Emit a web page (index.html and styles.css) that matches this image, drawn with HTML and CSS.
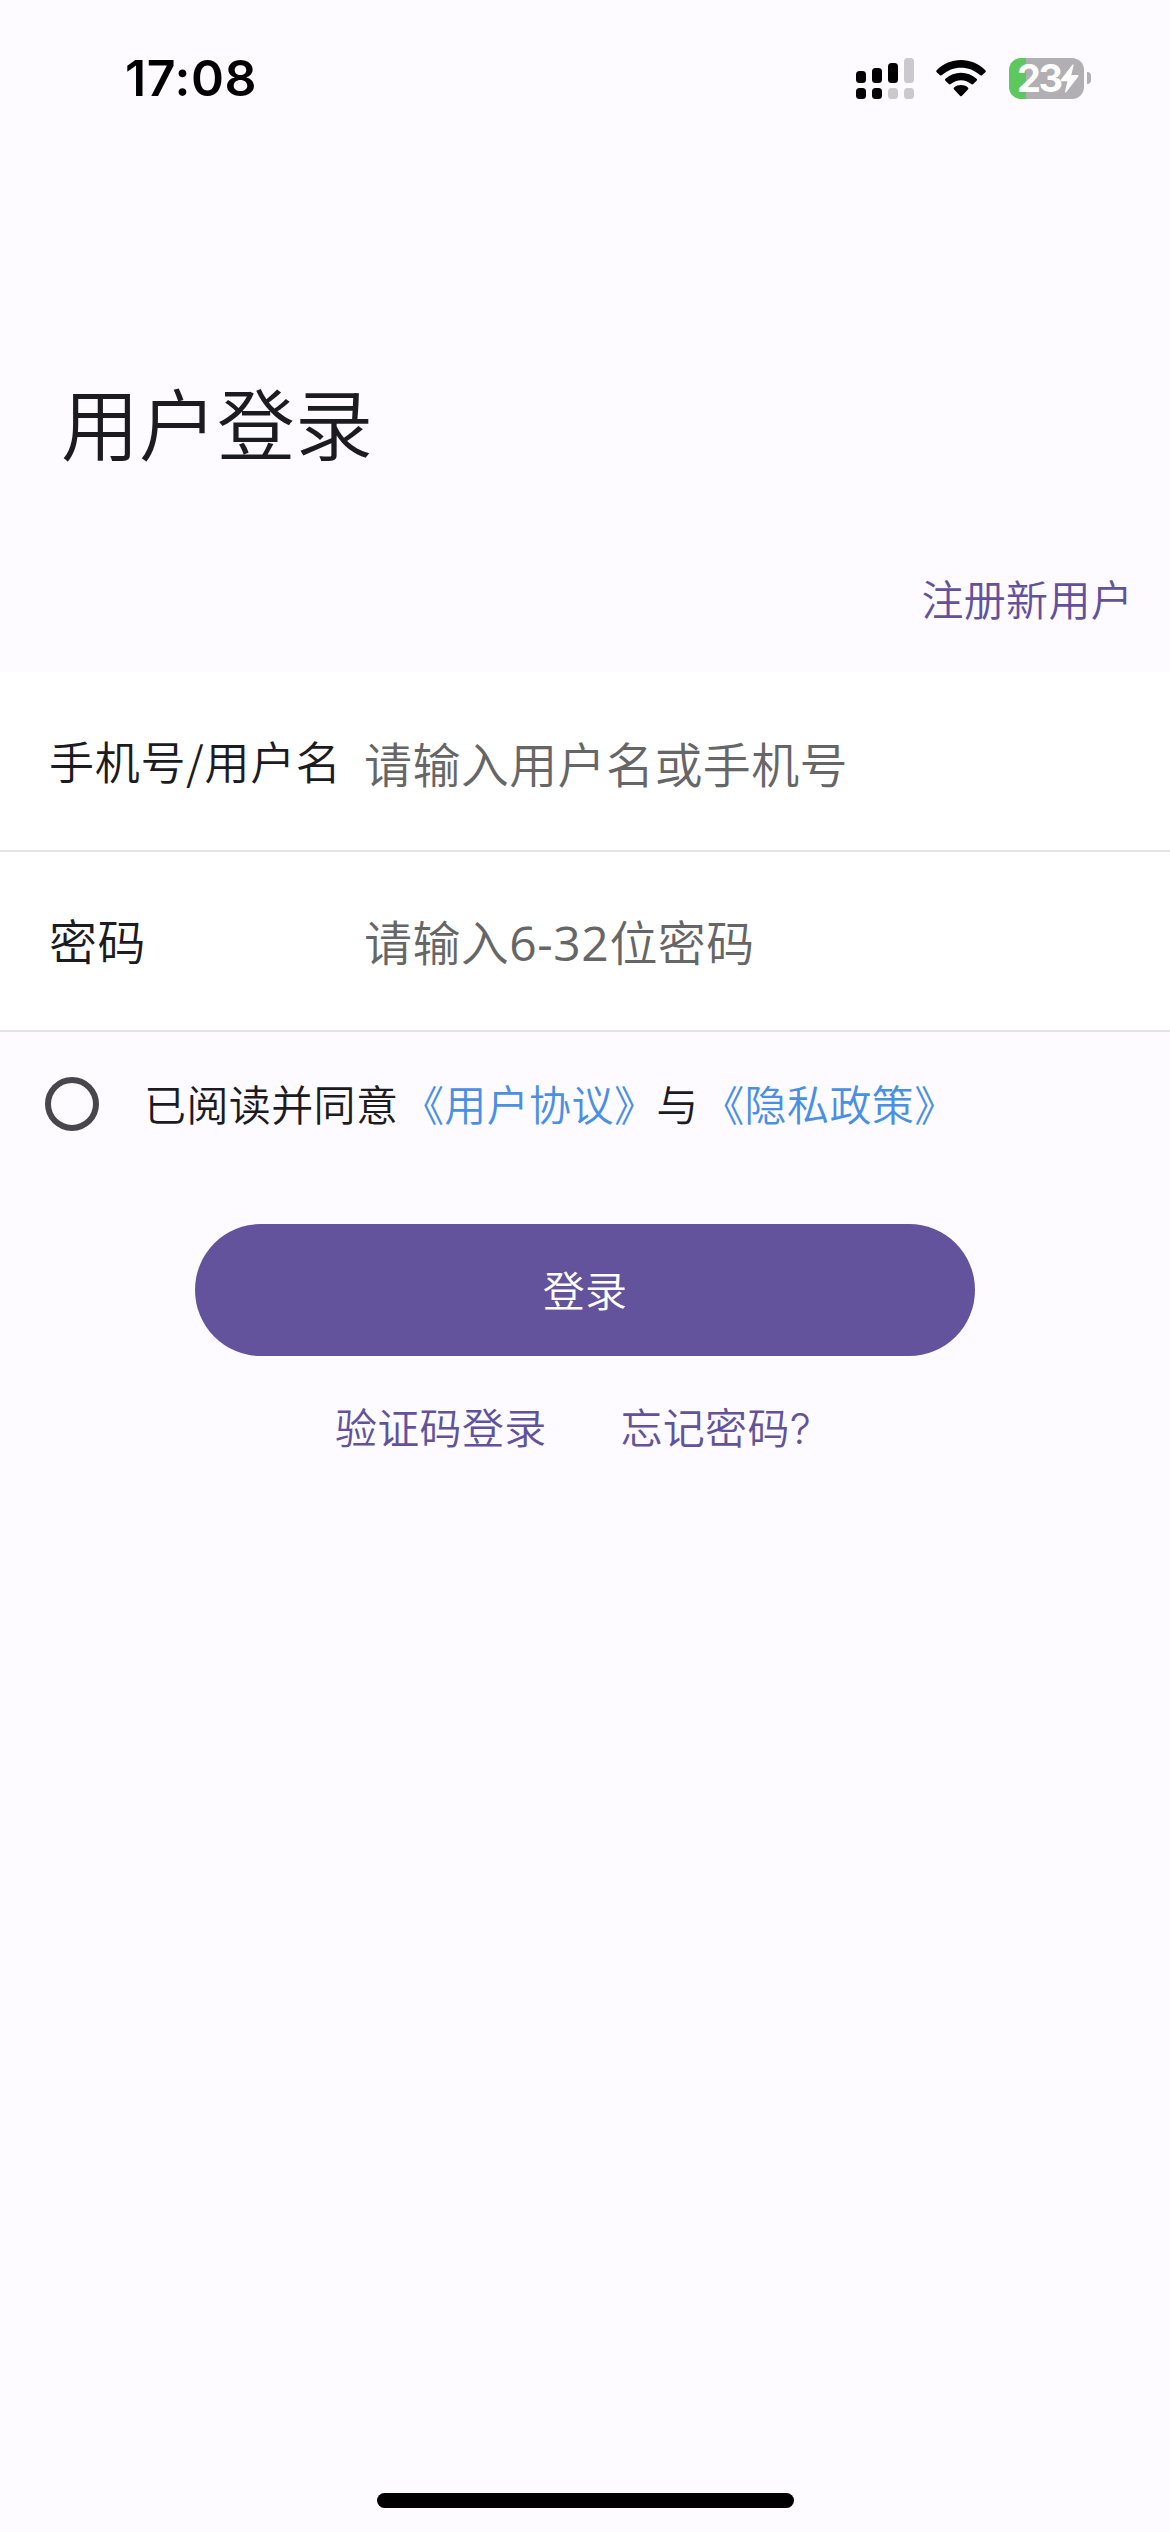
FILE: index.html
```html
<!DOCTYPE html>
<html lang="zh-CN">
<head>
<meta charset="utf-8">
<title>用户登录</title>
<link rel="stylesheet" href="styles.css">
</head>
<body>
<div class="screen">
  <header class="status">
    <span class="time">17:08</span>
    <div class="indicators">
      <svg class="signal" width="58" height="41" viewBox="0 0 58 41">
        <g fill="#000"><rect x="0" y="13" width="10" height="12" rx="3.5"/><rect x="16" y="10" width="10" height="15" rx="3.5"/><rect x="32" y="5" width="10" height="20" rx="3.5"/><rect x="0" y="30" width="10" height="11" rx="3.5"/><rect x="16" y="30" width="10" height="11" rx="3.5"/></g>
        <g fill="#cbc9cd"><rect x="48" y="0" width="10" height="25" rx="3.5"/><rect x="32" y="30" width="10" height="11" rx="3.5"/><rect x="48" y="30" width="10" height="11" rx="3.5"/></g>
      </svg>
      <svg class="wifi" width="50" height="37" viewBox="0 0 50 37">
        <path d="M.7 10.2C14-3.4 36-3.4 49.3 10.2Q50.3 11.2 49.3 12.2L46 15.2Q45 16 44 15.1C33.5 5.2 16.500 5.200 6 15.100Q5 16 4 15.200L.7 12.200Q-.3 11.200.7 10.200Z"/>
        <path d="M9.400 18.800C18 10.700 32 10.700 40.600 18.800Q41.600 19.800 40.600 20.800L37.200 24Q36.200 24.900 35.200 24C29.500 18.900 20.500 18.900 14.800 24Q13.800 24.900 12.800 24L9.400 20.800Q8.400 19.800 9.400 18.800Z"/>
        <path d="M18.100 27.400C22 24.200 28 24.200 31.900 27.400Q33 28.400 31.900 29.500L26 35.800Q25 36.800 24 35.800L18.100 29.500Q17 28.400 18.100 27.400Z"/>
      </svg>
      <div class="battery">
        <div class="cell">
          <span class="level">23</span>
          <svg class="bolt" width="19" height="29" viewBox="0 0 19 29"><path d="M12.700.5Q14 .200 13.500 1.700L11.300 11H17.500Q19.300 11.200 18.200 12.700L6.300 28Q4.900 29.300 5.100 27.300L7.500 17.200H1.500Q-.2 17 .9 15.400Z"/></svg>
        </div>
        <div class="cap"></div>
      </div>
    </div>
  </header>

  <h1 class="title">用户登录</h1>
  <div class="register"><a class="link">注册新用户</a></div>

  <form class="form">
    <div class="row">
      <span class="label label-small">手机号/用户名</span>
      <span class="hint">请输入用户名或手机号</span>
    </div>
    <div class="row">
      <span class="label">密码</span>
      <span class="hint">请输入<span class="digits">6-32</span>位密码</span>
    </div>
  </form>

  <div class="agree">
    <span class="radio"></span>
    <span class="terms">已阅读并同意<a class="doc">《用户协议》</a>与<a class="doc">《隐私政策》</a></span>
  </div>

  <div class="submit">登录</div>

  <nav class="links">
    <a class="link">验证码登录</a>
    <a class="link">忘记密码<span class="mark">?</span></a>
  </nav>

  <div class="home"></div>
</div>
</body>
</html>
```
FILE: styles.css
```css
* { box-sizing: border-box; }
body { margin: 0; background: #fdfbff; }
.screen {
  width: 1170px;
  height: 2532px;
  display: flex;
  flex-direction: column;
  overflow: hidden;
  font-family: "Noto Sans CJK SC DemiLight", "Noto Sans CJK SC", sans-serif;
  font-size: 42px;
  font-weight: 350;
  letter-spacing: 0.3px;
  line-height: 60px;
  color: #1c1b1f;
  white-space: nowrap;
  font-kerning: none;
  text-spacing-trim: space-all;
}
.status {
  height: 156px;
  flex: none;
  display: flex;
  justify-content: space-between;
  align-items: center;
  padding: 0 79px 0 125px;
}
.time { font: 600 50px/60px Inter, sans-serif; letter-spacing: 0.600px; color: #000; }
.indicators { display: flex; align-items: center; }
.wifi { margin-left: 22px; }
.battery { display: flex; align-items: center; margin-left: 23px; }
.cell {
  width: 75px;
  height: 41px;
  border-radius: 12px;
  display: flex;
  align-items: center;
  padding-left: 8px;
  background: linear-gradient(90deg, #5fc75f 17px, #b1afb3 17px);
}
.level { width: 43px; font: 700 38px/41px Inter, sans-serif; letter-spacing: -2.500px; color: #fff; }
.bolt { fill: #fff; }
.cap { width: 4px; height: 12px; margin-left: 3px; border-radius: 0 5px 5px 0; background: #b1afb3; }

.title { margin: 215px 0 0 61px; font-size: 78px; line-height: 100px; font-weight: 350; letter-spacing: 0; }
.register { margin-top: 97px; padding-right: 37px; text-align: right; }
.link { color: #62529b; }

.form { margin-top: 44px; background: #fff; }
.row {
  height: 180px;
  display: flex;
  align-items: center;
  padding-left: 49px;
  border-bottom: 2px solid #e3e3e3;
}
.label { width: 315px; padding-bottom: 4px; font-size: 48px; letter-spacing: 0.6px; }
.label-small { padding-bottom: 0; font-size: 45px; letter-spacing: 0.700px; }
.hint { padding-top: 1px; font-size: 48px; letter-spacing: 0.400px; color: #666; }
.digits { font-family: "Open Sans", sans-serif; font-weight: 400; letter-spacing: 0.600px; }

.agree { margin-top: 42px; height: 60px; display: flex; align-items: center; padding-left: 45px; }
.radio { width: 54px; height: 54px; border: 6px solid #48464c; border-radius: 50%; }
.terms { margin-left: 45px; padding-bottom: 3px; letter-spacing: 0.400px; }
.doc { margin-left: 3.5px; color: #4a90e2; }

.submit {
  width: 780px;
  height: 132px;
  margin: 90px auto 0;
  border-radius: 66px;
  background: #63539c;
  color: #fff;
  text-align: center;
  line-height: 129px;
}
.links { display: flex; gap: 74px; margin-top: 40px; padding-left: 335px; }
.mark { font-family: Inter, sans-serif; }
.home { width: 417px; height: 15px; margin: auto auto 24px; border-radius: 8px; background: #000; }
```
